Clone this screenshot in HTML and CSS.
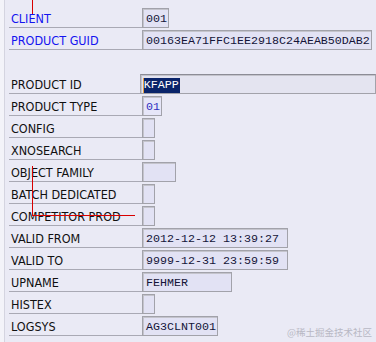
FILE: index.html
```html
<!DOCTYPE html>
<html lang="en">
<head>
    <meta charset="UTF-8">
    <title>Product Details</title>
    <link rel="stylesheet" href="styles.css">
</head>
<body>
<div class="screen">
    <div class="form">
        <div class="row"><span class="label key">CLIENT</span><span class="field w-client">001</span></div>
        <div class="row"><span class="label key">PRODUCT GUID</span><span class="field w-guid">00163EA71FFC1EE2918C24AEAB50DAB2</span></div>
        <div class="row blank"></div>
        <div class="row"><span class="label">PRODUCT ID</span><span class="field w-id focused"><span class="selected">KFAPP</span></span></div>
        <div class="row"><span class="label">PRODUCT TYPE</span><span class="field w-type blue">01</span></div>
        <div class="row"><span class="label">CONFIG</span><span class="field w-check"></span></div>
        <div class="row"><span class="label">XNOSEARCH</span><span class="field w-check"></span></div>
        <div class="row"><span class="label">OBJECT FAMILY</span><span class="field w-family"></span></div>
        <div class="row"><span class="label">BATCH DEDICATED</span><span class="field w-check"></span></div>
        <div class="row"><span class="label">COMPETITOR PROD</span><span class="field w-check"></span></div>
        <div class="row"><span class="label">VALID FROM</span><span class="field w-date">2012-12-12 13:39:27</span></div>
        <div class="row"><span class="label">VALID TO</span><span class="field w-date">9999-12-31 23:59:59</span></div>
        <div class="row"><span class="label">UPNAME</span><span class="field w-name">FEHMER</span></div>
        <div class="row"><span class="label">HISTEX</span><span class="field w-check"></span></div>
        <div class="row"><span class="label">LOGSYS</span><span class="field w-sys">AG3CLNT001</span></div>
    </div>

    <!-- red annotation marks -->
    <div class="mark mark-top"></div>
    <div class="mark mark-down"></div>
    <div class="mark mark-across"></div>

    <div class="watermark">@稀土掘金技术社区</div>
</div>
</body>
</html>
```

FILE: styles.css
```css
body {
    margin: 0;
    padding: 0;
    width: 376px;
    height: 342px;
    overflow: hidden;
    background-color: #f3f3f9;
}

.screen {
    position: relative;
    margin-left: 4px;
    height: 342px;
    border-left: 1px solid #d4d4e0;
    background-color: #eaeaf5;
}

.form {
    display: flex;
    flex-direction: column;
    padding-top: 6px;
    padding-left: 4px;
}

.row {
    display: flex;
    align-items: flex-end;
    height: 22px;
}

.label {
    box-sizing: border-box;
    width: 133px;
    height: 22px;
    padding: 4px 0 0 2px;
    line-height: 17px;
    border-bottom: 1px solid #a9a9b4;
    font-family: "DejaVu Sans Condensed", "DejaVu Sans", sans-serif;
    font-stretch: condensed;
    font-size: 12.5px;
    color: #101010;
    white-space: nowrap;
}

.label.key {
    color: #1414f0;
}

.field {
    box-sizing: border-box;
    display: block;
    height: 20px;
    margin-bottom: 0;
    padding: 2px 0 0 3px;
    line-height: 16px;
    border: 1px solid #a2a2aa;
    box-shadow: inset 1px 1px 0 #c4c4cc;
    background-color: #e2e2f4;
    font-family: "Liberation Mono", "Courier New", monospace;
    font-size: 11.67px;
    color: #141438;
    white-space: nowrap;
    overflow: hidden;
}

.field.blue {
    color: #3030c0;
    background-color: #e6e6f8;
}

.field.focused {
    background-color: #e4e4f0;
    border-top-color: #8c8c96;
    padding-left: 2px;
}

.selected {
    display: inline-block;
    height: 15px;
    line-height: 15px;
    padding-right: 1px;
    border-left: 1px solid #e8a040;
    background-color: #0a246a;
    color: #ffffff;
}

.w-client { width: 27px; }
.w-guid { width: 230px; }
.w-id { width: 240px; }
.w-type { width: 20px; }
.w-check { width: 13px; }
.w-family { width: 34px; }
.w-date { width: 146px; }
.w-name { width: 90px; }
.w-sys { width: 76px; }

.mark {
    position: absolute;
    background-color: #d80000;
}

.mark-top {
    left: 27px;
    top: 0;
    width: 1px;
    height: 14px;
}

.mark-down {
    left: 27px;
    top: 166px;
    width: 1px;
    height: 50px;
}

.mark-across {
    left: 27px;
    top: 215px;
    width: 103px;
    height: 1px;
}

.watermark {
    position: absolute;
    right: 4px;
    bottom: 3px;
    font-family: "Noto Sans CJK SC", sans-serif;
    font-size: 9.5px;
    color: #b8b8c4;
}
```
